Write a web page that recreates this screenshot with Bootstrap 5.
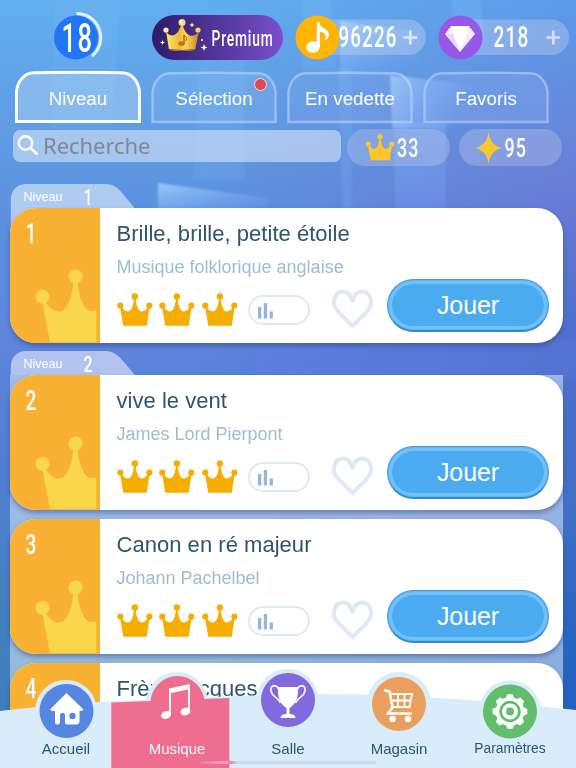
<!DOCTYPE html>
<html lang="fr">
<head>
<meta charset="utf-8">
<meta name="viewport" content="width=device-width, initial-scale=1">
<title>Musique</title>
<link href="https://cdn.jsdelivr.net/npm/bootstrap@5.3.0/dist/css/bootstrap.min.css" rel="stylesheet">
<style>
html,body{height:100%;overflow:hidden}
body{font-family:"Liberation Sans",Arial,sans-serif;background:#5f95e0}
svg{display:block;flex:none;overflow:visible}
.screen{width:576px;height:768px}
.backdrop{inset:0;z-index:0}
.slim{font-family:Roboto,sans-serif;font-weight:500;fill:#fff;letter-spacing:.06em}
.topbar{height:71px;padding:15px 6px 0 52px}
.premium{width:131px;height:45px;margin-left:49px;background:linear-gradient(90deg,#2c1c69,#7a4fcd)}
.coins{width:132px;height:45px;margin-left:12px}
.gems{width:132px;height:45px;margin-left:11px}
.tabs{padding:0 27px 0 15px;height:53px}
.tab-item{width:126px;height:52px;color:#fff;font-size:18.8px;line-height:55px}
.tab-item span{z-index:1}
.tab-item svg{left:0;top:0}
.dot{width:13px;height:13px;right:10px;top:7px;background:#e5484d;border:1px solid #f5d9e4}
.filters{padding:5px 14px 0 13px;height:60px}
.searchbox{width:328px;height:32px;margin-top:1px;border-radius:7px;background:rgba(224,233,250,.56);color:#7f8894;font:22px "Noto Sans",sans-serif;letter-spacing:-.05px;padding-left:4px}
.searchbox span{margin-top:-2px}
.stat{width:103px;height:37px;border-radius:18px/19px;background:rgba(190,200,235,.36)}
.stat-crowns{margin-right:4px}
.songs{padding:0 13px 0 10px}
.level-tab{height:24px}
.level-tab svg{margin-bottom:-30px}
.group-one{height:167px}
.group-two{height:500px}
.group-fill{background:rgba(219,232,246,.56)}
.song{height:135px;border-radius:26px;background:#fff;box-shadow:0 3px 5px rgba(35,60,125,.45);overflow:hidden}
.song + .song{margin-top:9px}
.cover{width:89.5px;background:#f8b133}
.cover .big{position:absolute;left:25px;bottom:1px}
.cover .num{position:absolute;left:0;top:0}
.info{padding:12px 14px 0 17px}
.name{font-size:22px;line-height:27px;color:#2e546f;letter-spacing:.03px}
.author{font-size:18px;line-height:22px;color:#a1bccf;margin-top:9px}
.actions{margin-top:.7px;height:53px}
.crowns{gap:7.3px;margin-top:14px}
.meter{width:62px;height:30px;border:2px solid #dfe9f5;margin:16px 0 0 10px;padding:0 0 4px 8px}
.heart{margin:10.500px 0 0 22px}
.play{width:162px;height:53px;border:1px solid #4b9bdd;border-bottom:2px solid #3787c9;border-radius:27px;background:#4aabf1;box-shadow:inset 0 0 0 1px #60b5f3,inset 0 0 0 4px #71c2fb;color:#fff;font-size:25px;line-height:50px;letter-spacing:-.1px}
.dock{height:100px;z-index:5}
.dock .ground{left:0;bottom:0}
.dock-items{padding:0 10.5px;height:100px}
.dock-item{width:111px;color:#2e546f;font-size:15px}
.dock-item span{line-height:18px;margin-bottom:10px}
.dock-item .tight{font-size:13.8px}
.dock-item svg{position:absolute;left:28px}
.pos-home,.pos-gear{top:16px}
.pos-music{top:8px}
.pos-cup{top:5px}
.pos-cart{top:9px}
.homebar{left:200px;bottom:4.5px;width:176px;height:2.5px;border-radius:2px;background:linear-gradient(90deg,#ee7a9b,#f0a9c0 15%,#ee7a9b 17%,#c9d7e6 21%,#c9d7e6)}
</style>
<script src="https://cdn.jsdelivr.net/npm/bootstrap@5.3.0/dist/js/bootstrap.bundle.min.js"></script>
</head>
<body>
<svg width="0" height="0" class="position-absolute">
  <defs>
    <symbol id="crown" viewBox="0 0 108 98">
      <circle cx="10" cy="37" r="9.5"/><circle cx="54" cy="10" r="9.8"/><circle cx="98" cy="37" r="9.5"/>
      <path d="M9 40L14 41Q23 56 34 55C44 54 50 35 51.500 15H56.500C58 35 64 54 74 55Q85 56 94 41L99 40L90 98H19Z"/>
    </symbol>
    <symbol id="bigcrown" viewBox="0 0 82 98">
      <circle cx="10" cy="37" r="9.3"/><circle cx="54" cy="10" r="9.3"/>
      <path d="M9 40L14 44Q23 57 33 57C44 55 50 35 51.500 15H56.500C58 35 64 54 74 56Q78 57 82 55V98H20Z"/>
    </symbol>
    <symbol id="heart" viewBox="0 0 41 40">
      <path d="M20.500 37L6 22.500C-2 14 3 2.500 11 2.500C17 2.500 19.500 8 20.500 13C21.500 8 24 2.500 30 2.500C38 2.500 43 14 35 22.500Z" fill="none" stroke="#dfe9f6" stroke-width="4"/>
    </symbol>
    <symbol id="bars" viewBox="0 0 16 16"><path d="M0 4h3.300v11.500H0zM5.800 0h3.300v15.500H5.800zM11.600 8.500h3.300v7h-3.300z" fill="#94b6de"/></symbol>
    <symbol id="tabshape" viewBox="0 0 126 52"><path d="M1.500 50.500V20C3 10 9 2 19 1.800Q63 .7 107 1.800C117 2 123 10 124.500 20V50.500Z"/></symbol>
  </defs>
</svg>
<main class="screen position-relative overflow-hidden">
  <svg class="backdrop position-absolute" width="576" height="768" viewBox="0 0 576 768">
    <defs>
      <linearGradient id="sky" x2="0" y2="1"><stop stop-color="#62afef"/><stop offset=".25" stop-color="#5d93df"/><stop offset=".44" stop-color="#5f84dc"/><stop offset=".62" stop-color="#517fd1"/><stop offset=".82" stop-color="#4180bd"/><stop offset="1" stop-color="#3d7fb9"/></linearGradient>
      <linearGradient id="skyr" x2="0" y2="1"><stop stop-color="#5c9ae8"/><stop offset=".1" stop-color="#638fdf"/><stop offset=".25" stop-color="#6a7bd5"/><stop offset=".42" stop-color="#506fcd"/><stop offset=".64" stop-color="#4470c7"/><stop offset=".86" stop-color="#2463c1"/></linearGradient>
      <linearGradient id="fade"><stop offset=".35" stop-color="#000"/><stop offset="1" stop-color="#fff"/></linearGradient>
      <mask id="side"><rect width="576" height="768" fill="url(#fade)"/></mask>
      <linearGradient id="ray" x2=".7" y2="1"><stop stop-color="#a7daff" stop-opacity=".75"/><stop offset="1" stop-color="#83a9ff" stop-opacity="0"/></linearGradient>
      <linearGradient id="beam" x2="1" y2=".25"><stop stop-color="#a7d4ff" stop-opacity=".8"/><stop offset=".85" stop-color="#83a9ff" stop-opacity="0"/></linearGradient>
      <linearGradient id="drop" x2="0" y2="1"><stop stop-color="#8fc4ff" stop-opacity=".3"/><stop offset="1" stop-color="#7fa6ff" stop-opacity=".25"/></linearGradient>
      <filter id="soft"><feGaussianBlur stdDeviation="1.2"/></filter>
    </defs>
    <rect width="576" height="768" fill="url(#sky)"/>
    <rect width="576" height="768" fill="url(#skyr)" mask="url(#side)"/>
    <g filter="url(#soft)">
      <path d="M55 0H120L112 130H50ZM200 60H245V180H192Z" fill="#8ac8ff" opacity=".13"/>
      <path d="M302 0H331L336 68H352V210H342L338 70H302Z" fill="#8ac8ff" opacity=".16"/>
      <path d="M340 21L420 32V76H340Z" fill="url(#ray)"/>
      <path d="M390 75L500 88V128H392Z" fill="url(#beam)"/>
      <path d="M394 122H446V210H395Z" fill="url(#drop)"/>
      <path d="M158 183L268 198V222H158Z" fill="url(#ray)"/>
      <path d="M255 340H576V380H255Z" fill="#6a80ee" opacity=".22"/>
      <path d="M451 0H480L486 40H455Z" fill="#83c8ff" opacity=".25"/>
    </g>
  </svg>

  <header class="topbar d-flex align-items-start position-relative">
    <svg width="51" height="45" viewBox="0 0 51 45"><circle cx="24" cy="22.500" r="22" fill="#2276f3"/><path d="M24.500 -1.500A24 24 0 0 1 40 41" fill="none" stroke="#e4f4ff" stroke-width="3"/><text class="slim" x="9.500" y="37" font-size="40" textLength="32" lengthAdjust="spacingAndGlyphs">18</text></svg>
    <div class="premium rounded-pill">
      <svg width="131" height="45" viewBox="0 0 131 45">
        <defs><linearGradient id="gold"><stop stop-color="#ffe568"/><stop offset=".4" stop-color="#edbb3e"/><stop offset=".6" stop-color="#f9d65b"/><stop offset="1" stop-color="#c88619"/></linearGradient></defs>
        <path d="M14 16C17 22 25 24 30 8C34 24 43 23 47 16L43 35Q30 37 17 35Z" fill="url(#gold)"/><path d="M17 34.500Q30 36.500 43.500 34.500" fill="none" stroke="#8d5a14" stroke-width="1"/>
        <circle cx="14" cy="15" r="2.600" fill="#fff0a1"/><circle cx="30" cy="7.500" r="3.500" fill="#f8dc75"/><circle cx="46" cy="15" r="2.600" fill="#f5ce5c"/><circle cx="29" cy="6.500" r="1.300" fill="#fff"/>
        <path d="M32 20V28" stroke="#ae6a19" stroke-width="1.500"/><path d="M32 20Q36 22 34 26" fill="none" stroke="#ae6a19"/><ellipse cx="29.500" cy="28.500" rx="3.300" ry="2.300" fill="#b8751c"/>
        <path d="M52 29L53 31.500L55.500 32.500L53 33.500L52 36L51 33.500L48.500 32.500L51 31.500ZM40 7.500l.8 1.700 1.700.8-1.700.8-.8 1.700-.8-1.700-1.700-.8 1.700-.8ZM10.500 25l.7 1.800 1.800.7-1.800.7-.7 1.800-.7-1.800-1.800-.7 1.800-.7Z" fill="#fff4ba"/><circle cx="50" cy="25" r="1" fill="#ffd"/>
        <text class="slim" x="59.500" y="30.500" font-size="22.500" textLength="62" lengthAdjust="spacingAndGlyphs">Premium</text>
      </svg>
    </div>
    <div class="coins">
      <svg width="132" height="45" viewBox="0 0 132 45"><rect x="15" y="4.500" width="116" height="35.500" rx="17.750" fill="#b6cdf1" opacity=".45"/><circle cx="22.500" cy="22.500" r="22" fill="#ffb502"/><ellipse cx="18" cy="32" rx="6.800" ry="5.800" transform="rotate(-12 18 32)" fill="#fff"/><path d="M22 8.500C23 6 25 7 25 9.500C26 13 34 14 34 20Q34 23 29.500 25.500C32 20 30 17 25 17V32H21.500Z" fill="#fff"/><text class="slim" x="43.500" y="32" font-size="29" textLength="59" lengthAdjust="spacingAndGlyphs">96226</text><path d="M108.500 22.500H122M115.300 15.500V29.500" stroke="#dbeaff" stroke-width="2.700"/></svg>
    </div>
    <div class="gems">
      <svg width="132" height="45" viewBox="0 0 132 45"><rect x="15" y="4.500" width="116" height="35.500" rx="17.750" fill="#b6c6ef" opacity=".45"/><circle cx="22.500" cy="22.500" r="22" fill="#9858e7"/><path d="M13 11H31L37 19L22 37L7 19Z" fill="#f5edff"/><path d="M15 19H29L22 37Z" fill="#fff"/><path d="M7 19H15L22 37Z" fill="#e6dafa"/><path d="M13 11H31L29 19H15Z" fill="#fff"/><text class="slim" x="55.500" y="32" font-size="29" textLength="36" lengthAdjust="spacingAndGlyphs">218</text><path d="M108.500 22.500H122M115.300 15.500V29.500" stroke="#d6e2fb" stroke-width="2.700"/></svg>
    </div>
  </header>

  <nav class="tabs d-flex justify-content-between position-relative">
    <div class="tab-item position-relative text-center"><svg class="position-absolute" width="126" height="52" fill="rgba(190,218,246,.4)" stroke="#fff" stroke-width="3"><use href="#tabshape"/></svg><span class="position-relative">Niveau</span></div>
    <div class="tab-item position-relative text-center"><svg class="position-absolute" width="126" height="53" fill="rgba(170,200,245,.18)" stroke="rgba(190,215,250,.6)" stroke-width="2.400"><use href="#tabshape"/></svg><span class="position-relative">Sélection</span><i class="dot position-absolute rounded-circle"></i></div>
    <div class="tab-item position-relative text-center"><svg class="position-absolute" width="126" height="53" fill="rgba(150,180,240,.18)" stroke="rgba(190,215,250,.6)" stroke-width="2.400"><use href="#tabshape"/></svg><span class="position-relative">En vedette</span></div>
    <div class="tab-item position-relative text-center"><svg class="position-absolute" width="126" height="53" fill="rgba(150,180,240,.22)" stroke="rgba(190,210,250,.6)" stroke-width="2.400"><use href="#tabshape"/></svg><span class="position-relative">Favoris</span></div>
  </nav>

  <div class="filters d-flex justify-content-between align-items-start position-relative">
    <div class="searchbox d-flex align-items-center"><svg width="26" height="24" viewBox="0 0 26 24" fill="none" stroke="#fff"><circle cx="8.500" cy="9" r="6.700" stroke-width="2.400"/><path d="M13.500 14L20.500 20.500" stroke-width="3"/></svg><span>Recherche</span></div>
    <div class="stat stat-crowns"><svg width="103" height="37" viewBox="0 0 103 37"><use href="#crown" x="18.500" y="5" width="29" height="26.500" fill="#fec62e"/><text class="slim" x="50" y="28" font-size="26" textLength="22.500" lengthAdjust="spacingAndGlyphs">33</text></svg></div>
    <div class="stat"><svg width="103" height="37" viewBox="0 0 103 37"><path d="M29.500 3Q31 16.500 43 19Q31 21.500 29.500 35Q28 21.500 16 19Q28 16.500 29.500 3Z" fill="#fec62e"/><text class="slim" x="45.500" y="28" font-size="26" textLength="22.500" lengthAdjust="spacingAndGlyphs">95</text></svg></div>
  </div>

  <section class="songs position-relative">
    <div class="group-one">
      <div class="level-tab"><svg width="126" height="54.500" viewBox="0 0 126 54.500"><path d="M.8 54V16C.8 6 7 0 17 0H95C104 0 109 5 113 10L125 24.500H26Q8 27 .8 54Z" fill="#c5d9f6" opacity=".8"/><text x="13.500" y="16.700" font-size="12.500" fill="#fff" textLength="39" lengthAdjust="spacingAndGlyphs">Niveau</text><text class="slim" x="74" y="20.500" font-size="22" textLength="9" lengthAdjust="spacingAndGlyphs">1</text></svg></div>
      <article class="song d-flex position-relative">
        <div class="cover position-relative"><svg class="big" width="61.500" height="73.500" fill="#fad64a"><use href="#bigcrown"/></svg><svg class="num" width="40" height="45"><text class="slim" x="15.500" y="35" font-size="28" textLength="12" lengthAdjust="spacingAndGlyphs">1</text></svg></div>
        <div class="info flex-grow-1"><div class="name">Brille, brille, petite étoile</div><div class="author">Musique folklorique anglaise</div>
          <div class="actions d-flex align-items-start"><div class="crowns d-flex"><svg width="35.700" height="33" fill="#f7ad00"><use href="#crown"/></svg><svg width="35.700" height="33" fill="#f7ad00"><use href="#crown"/></svg><svg width="35.700" height="33" fill="#f7ad00"><use href="#crown"/></svg></div><div class="meter rounded-pill d-flex align-items-end"><svg width="16" height="16"><use href="#bars"/></svg></div><svg class="heart" width="41" height="40"><use href="#heart"/></svg><div class="play text-center ms-auto">Jouer</div></div></div>
      </article>
    </div>
    <div class="group-two">
      <div class="level-tab"><svg width="126" height="24" viewBox="0 0 126 24"><path d="M.8 24V16C.8 6 7 0 17 0H95C104 0 109 5 113 10L125 24Z" fill="#c5d5f4" opacity=".8"/><text x="13.500" y="16.700" font-size="12.500" fill="#fff" textLength="39" lengthAdjust="spacingAndGlyphs">Niveau</text><text class="slim" x="73.500" y="20.500" font-size="22" textLength="10" lengthAdjust="spacingAndGlyphs">2</text></svg></div>
      <div class="group-fill h-100"><article class="song d-flex position-relative">
        <div class="cover position-relative"><svg class="big" width="61.500" height="73.500" fill="#fad64a"><use href="#bigcrown"/></svg><svg class="num" width="40" height="45"><text class="slim" x="15.500" y="35" font-size="28" textLength="12" lengthAdjust="spacingAndGlyphs">2</text></svg></div>
        <div class="info flex-grow-1"><div class="name">vive le vent</div><div class="author">James Lord Pierpont</div>
          <div class="actions d-flex align-items-start"><div class="crowns d-flex"><svg width="35.700" height="33" fill="#f7ad00"><use href="#crown"/></svg><svg width="35.700" height="33" fill="#f7ad00"><use href="#crown"/></svg><svg width="35.700" height="33" fill="#f7ad00"><use href="#crown"/></svg></div><div class="meter rounded-pill d-flex align-items-end"><svg width="16" height="16"><use href="#bars"/></svg></div><svg class="heart" width="41" height="40"><use href="#heart"/></svg><div class="play text-center ms-auto">Jouer</div></div></div>
      </article>
      <article class="song d-flex position-relative">
        <div class="cover position-relative"><svg class="big" width="61.500" height="73.500" fill="#fad64a"><use href="#bigcrown"/></svg><svg class="num" width="40" height="45"><text class="slim" x="15.500" y="35" font-size="28" textLength="12" lengthAdjust="spacingAndGlyphs">3</text></svg></div>
        <div class="info flex-grow-1"><div class="name">Canon en ré majeur</div><div class="author">Johann Pachelbel</div>
          <div class="actions d-flex align-items-start"><div class="crowns d-flex"><svg width="35.700" height="33" fill="#f7ad00"><use href="#crown"/></svg><svg width="35.700" height="33" fill="#f7ad00"><use href="#crown"/></svg><svg width="35.700" height="33" fill="#f7ad00"><use href="#crown"/></svg></div><div class="meter rounded-pill d-flex align-items-end"><svg width="16" height="16"><use href="#bars"/></svg></div><svg class="heart" width="41" height="40"><use href="#heart"/></svg><div class="play text-center ms-auto">Jouer</div></div></div>
      </article>
      <article class="song d-flex position-relative">
        <div class="cover position-relative"><svg class="num" width="40" height="45"><text class="slim" x="15.500" y="35" font-size="28" textLength="12" lengthAdjust="spacingAndGlyphs">4</text></svg></div>
        <div class="info flex-grow-1"><div class="name">Frère Jacques</div></div>
      </article></div>
    </div>
  </section>

  <footer class="dock position-absolute bottom-0 start-0 w-100">
    <svg class="ground position-absolute" width="576" height="100" viewBox="0 668 576 100">
      <path d="M0 711Q80 702 140 700Q220 696 318 694Q430 694 576 710V768H0Z" fill="#d9ecfc"/>
      <g fill="#d9ecfc"><circle cx="66" cy="711" r="31"/><circle cx="177" cy="703" r="31"/><circle cx="287.500" cy="700" r="31"/><circle cx="399" cy="704" r="32"/><circle cx="510" cy="711.500" r="31"/></g>
      <path d="M111.300 702.500L229.300 698V768H111.300Z" fill="#ef6d8f"/>
    </svg>
    <div class="dock-items d-flex position-relative">
      <div class="dock-item position-relative d-flex flex-column justify-content-end align-items-center"><svg class="pos-home" width="55" height="55" viewBox="0 0 55 55"><circle cx="27.500" cy="27" r="27" fill="#5686e2"/><path d="M27.500 9L11 25.500L13 27H16V38Q16 40.500 18.500 40.500Q21 40.500 21 38V31Q21 29 23 29H24Q26 29 26 31V38Q26 40.500 28.500 40.500H37Q40.500 40.500 40.500 37V27H43L44.500 25.500Z" fill="#fff"/><circle cx="33.500" cy="32" r="3.200" fill="#5686e2"/></svg><span>Accueil</span></div>
      <div class="dock-item position-relative d-flex flex-column justify-content-end align-items-center text-white"><svg class="pos-music" width="55" height="55" viewBox="0 0 55 55"><circle cx="27.500" cy="27" r="27" fill="#ef6d8f"/><path d="M20 39V14L39 10V34" fill="none" stroke="#fff" stroke-width="2"/><path d="M19 12.500L40 8V13L19 17.500Z" fill="#fff"/><ellipse cx="16" cy="39" rx="5" ry="3.800" transform="rotate(-18 16 39)" fill="#fff"/><ellipse cx="35.500" cy="35.500" rx="5" ry="3.800" transform="rotate(-18 35.500 35.500)" fill="#fff"/></svg><span>Musique</span></div>
      <div class="dock-item position-relative d-flex flex-column justify-content-end align-items-center"><svg class="pos-cup" width="55" height="55" viewBox="0 0 55 55"><circle cx="27" cy="27" r="27" fill="#8369de"/><path d="M17 14H37C37.500 23 35.500 31 28.500 35V41Q34.500 41 34.500 45H19.500Q19.500 41 25.500 41V35C18.500 31 16.500 23 17 14Z" fill="#fff"/><path d="M17.500 16C15.500 11 8.500 12 10 18C11.500 25 16.500 23 19.500 30M36.500 16C38.500 11 45.500 12 44 18C42.500 25 37.500 23 34.500 30" fill="none" stroke="#fff" stroke-width="1.600"/></svg><span>Salle</span></div>
      <div class="dock-item position-relative d-flex flex-column justify-content-end align-items-center"><svg class="pos-cart" width="55" height="55" viewBox="0 0 55 55"><circle cx="27" cy="27" r="27" fill="#eb9f5f"/><g fill="none" stroke="#fff"><path d="M12 13L17.500 14.500L20.500 30.500L16 36.500H40" stroke-width="2.500"/><path d="M18 17H40L37.500 30H20M19 23.500H39M26 17V30M32.500 17V30" stroke-width="1.800"/></g><circle cx="20.500" cy="42" r="3.200" fill="#fff"/><circle cx="36" cy="42" r="3.200" fill="#fff"/></svg><span>Magasin</span></div>
      <div class="dock-item position-relative d-flex flex-column justify-content-end align-items-center"><svg class="pos-gear" width="55" height="55" viewBox="0 0 55 55"><circle cx="27" cy="27.500" r="27" fill="#62bd6d"/><g transform="translate(27 27.500)"><circle r="12.500" fill="none" stroke="#fff" stroke-width="3.600"/><g fill="#fff"><path id="cog" d="M-4.500 -13L-2.600 -17.300H2.600L4.500 -13Z"/><use href="#cog" transform="rotate(45)"/><use href="#cog" transform="rotate(90)"/><use href="#cog" transform="rotate(135)"/><use href="#cog" transform="rotate(180)"/><use href="#cog" transform="rotate(225)"/><use href="#cog" transform="rotate(270)"/><use href="#cog" transform="rotate(315)"/></g><circle r="6" fill="none" stroke="#fff" stroke-width="4"/></g></svg><span class="tight">Paramètres</span></div>
    </div>
    <div class="homebar position-absolute"></div>
  </footer>
</main>
</body>
</html>
